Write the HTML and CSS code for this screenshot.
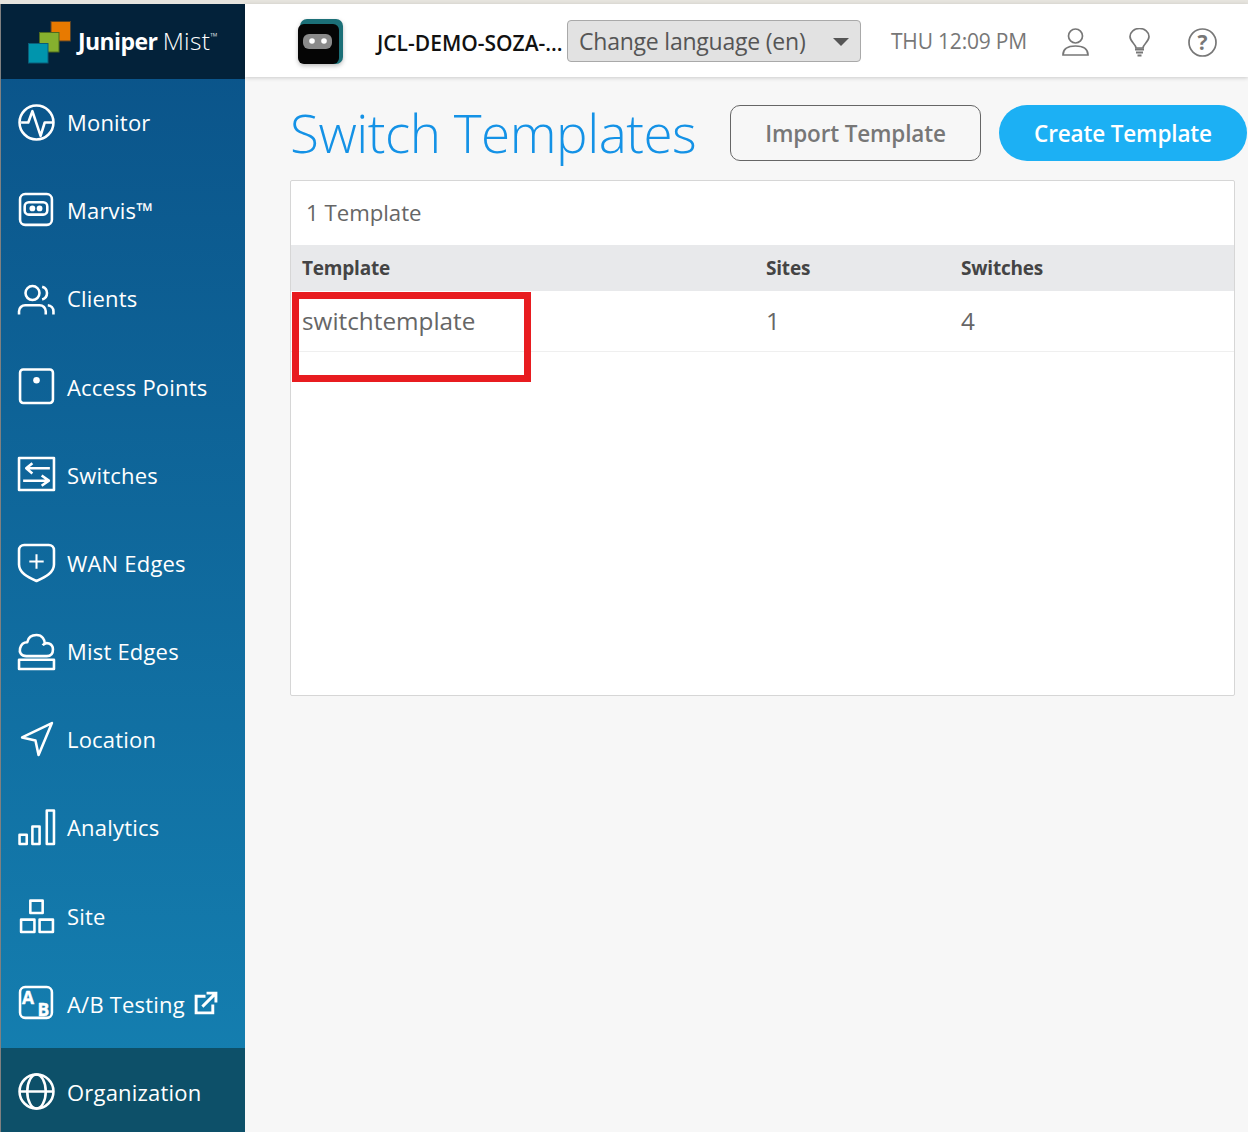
FILE: index.html
```html
<!DOCTYPE html>
<html lang="en">
<head>
<meta charset="utf-8">
<title>Switch Templates</title>
<link rel="stylesheet" href="styles.css">
</head>
<body>
<div class="app">
  <aside class="sidebar">
    <div class="brand">
      <svg class="brand-mark" width="44" height="44" viewBox="0 0 44 44">
        <rect x="23" y="0.500" width="19.500" height="19.500" fill="#e87a00" stroke="#5a4326"/>
        <rect x="11.500" y="11.500" width="19.500" height="19.500" fill="#86b02e" stroke="#4e6b1e"/>
        <rect x="0.500" y="22.500" width="19.500" height="19.500" fill="#0095ad" stroke="#0a5d78"/>
      </svg>
      <span class="brand-name"><b>Juniper</b> <span class="brand-thin">Mist</span><sup>™</sup></span>
    </div>
    <nav class="nav">
      <a class="nav-item"><svg class="ico" viewBox="0 0 36 36"><circle cx="18" cy="18" r="16.500"/><path d="M3 18h7l4-11 8 24 4-13h8"/></svg><span>Monitor</span></a>
      <a class="nav-item"><svg class="ico" viewBox="0 0 36 36"><rect x="2" y="2" width="31" height="30" rx="5"/><rect x="6.500" y="10" width="22" height="12" rx="4"/><circle cx="14" cy="16" r="2.800" class="solid"/><circle cx="21" cy="16" r="2.800" class="solid"/></svg><span>Marvis™</span></a>
      <a class="nav-item"><svg class="ico" viewBox="0 0 36 36"><circle cx="14.100" cy="12.700" r="6.800"/><path d="M1 33.500v-3a6 6 0 0 1 6-6h14a6 6 0 0 1 6 6v3M23.500 6.500a6.500 6.500 0 0 1 0 12.500M29 24.500a6 6 0 0 1 5.500 6v3"/></svg><span>Clients</span></a>
      <a class="nav-item"><svg class="ico" viewBox="0 0 36 36"><rect x="2" y="1.500" width="32" height="32.500" rx="3"/><circle cx="18" cy="12" r="3.200" class="solid"/></svg><span>Access Points</span></a>
      <a class="nav-item"><svg class="ico" viewBox="0 0 36 36"><rect x="1" y="2" width="34" height="31"/><path d="M31 12H8l6-5M8 12l6 5M5 24h25l-7-5M30 24l-7 5"/></svg><span>Switches</span></a>
      <a class="nav-item"><svg class="ico" viewBox="0 0 36 36"><path d="M6 1h24a5 5 0 0 1 5 5v14c0 8-8 12-17 16C9 32 1 28 1 20V6a5 5 0 0 1 5-5z"/><path class="thin" d="M18 10v14M11 17h14"/></svg><span>WAN Edges</span></a>
      <a class="nav-item"><svg class="ico" viewBox="0 0 36 36"><path d="M8 22.500C3 22.500 1 19 2 15 3 11 6 9 9 9 10 4 14 2 18 2 24 2 26 7 26 10M24 12C27 8 34 10 34 16 34 20 32 22.500 28 22.500H8"/><rect x="1" y="26" width="34" height="9"/></svg><span>Mist Edges</span></a>
      <a class="nav-item"><svg class="ico" viewBox="0 0 36 36"><path d="M33 2 4 16l13 3 3 14z"/></svg><span>Location</span></a>
      <a class="nav-item"><svg class="ico" viewBox="0 0 36 36"><rect x="1.500" y="25" width="7" height="9"/><rect x="14" y="17" width="7" height="17"/><rect x="28" y="1.500" width="7" height="32.500"/></svg><span>Analytics</span></a>
      <a class="nav-item"><svg class="ico" viewBox="0 0 36 36"><rect x="12" y="3.500" width="12" height="12"/><rect x="3" y="22" width="13" height="12"/><rect x="21" y="22" width="13" height="12"/></svg><span>Site</span></a>
      <a class="nav-item"><svg class="ico" viewBox="0 0 36 36"><rect x="2" y="2" width="31" height="30" rx="5"/><text x="4" y="18.300" class="ab">A</text><text x="19" y="30.500" class="ab">B</text></svg><span>A/B Testing</span><svg class="ext" viewBox="0 0 24 24"><path d="M12 5H3v16h16v-8M9 15 21 3M13 2h9v9"/></svg></a>
      <a class="nav-item active"><svg class="ico" viewBox="0 0 36 36"><circle cx="18" cy="18" r="16.500"/><ellipse cx="18" cy="18" rx="9" ry="16.500"/><path d="M2 18h32"/></svg><span>Organization</span></a>
    </nav>
  </aside>
  <div class="main">
    <header class="topbar">
      <svg class="bot" width="48" height="50" viewBox="0 0 48 50">
        <rect x="3" y="1" width="43" height="45" rx="7" fill="#1c7078"/>
        <rect x="1" y="6" width="41" height="40" rx="6" fill="#050505"/>
        <rect x="6" y="16" width="29" height="15" rx="6" fill="#8a8a8a"/>
        <circle cx="15" cy="23" r="2.800" fill="#fff"/>
        <circle cx="27" cy="23" r="2.800" fill="#fff"/>
      </svg>
      <span class="org-name">JCL-DEMO-SOZA-...</span>
      <div class="lang"><span>Change language (en)</span><i class="caret"></i></div>
      <span class="clock">THU 12:09 PM</span>
      <div class="tools">
        <svg class="tool" viewBox="0 0 29 29"><circle cx="14.500" cy="8" r="7"/><path d="M2 27c0-5 3-9 12.500-9S27 22 27 27z"/></svg>
        <svg class="tool" viewBox="0 0 29 29"><path d="M11 20c0-4-6-6-6-11.500a9.500 8 0 0 1 19 0C24 14 18 16 18 20z"/><path class="lines" d="M10 21.500h9M11 24.500h7M12.500 27.500h4"/></svg>
        <svg class="tool" viewBox="0 0 29 29"><circle cx="14.500" cy="14.500" r="13.500"/><text x="14.500" y="21.500" class="q">?</text></svg>
      </div>
    </header>
    <main class="content">
      <div class="page-head">
        <h1>Switch Templates</h1>
        <button class="btn btn-outline">Import Template</button>
        <button class="btn btn-primary">Create Template</button>
      </div>
      <section class="panel">
        <div class="panel-title">1 Template</div>
        <div class="row row-head"><span>Template</span><span>Sites</span><span>Switches</span></div>
        <div class="row row-body"><span>switchtemplate</span><span>1</span><span>4</span><i class="highlight"></i></div>
      </section>
    </main>
  </div>
</div>
</body>
</html>
```
FILE: styles.css
```css
* { box-sizing: border-box; }
html, body { margin: 0; height: 100%; overflow: hidden; }
body { font-family: "Open Sans", "Liberation Sans", sans-serif; color: #555; background: #e6e4de; }
.app { display: grid; grid-template-columns: 245px 1fr; height: 1132px; padding-top: 4px; }

.sidebar { display: flex; flex-direction: column; border-left: 1px solid #808080; background: linear-gradient(180deg, #0a5288 0%, #1581b2 100%); overflow: hidden; min-height: 0; }
.brand { flex: 0 0 75px; display: flex; align-items: flex-start; background: #03223a; padding: 17px 0 0 27px; gap: 6px; }
.brand-name { color: #fff; font-size: 23px; line-height: 40px; letter-spacing: -0.6px; white-space: nowrap; }
.brand-name b { font-weight: 700; }
.brand-thin { font-weight: 300; font-size: 24.500px; letter-spacing: 0.3px; }
.brand-name sup { font-size: 10px; vertical-align: 10px; line-height: 0; letter-spacing: 0; font-weight: 300; }
.nav { display: flex; flex-direction: column; margin-top: -1px; }
.nav-item { flex: 0 0 88.18px; display: flex; align-items: center; gap: 12px; padding-left: 17px; color: #fff; font-size: 22px; letter-spacing: 0.2px; }
.nav-item.active { background: #0d5069; }
.nav-item span { white-space: nowrap; }
.ico { width: 37px; height: 37px; flex: none; fill: none; stroke: #fff; stroke-width: 2.500; stroke-linejoin: round; overflow: visible; }
.ico .solid { fill: #fff; stroke: none; }
.ico .thin { stroke-width: 2; }
.ico .ab { fill: #fff; stroke: #fff; stroke-width: 0.4; font-size: 17px; font-weight: 700; letter-spacing: 0; }
.ext { width: 25px; height: 25px; fill: none; stroke: #fff; stroke-width: 2.800; margin-left: -4px; }

.main { display: flex; flex-direction: column; background: #f7f7f7; min-width: 0; }
.topbar { flex: 0 0 73px; display: flex; align-items: center; background: #fff; box-shadow: 0 1px 4px rgba(0,0,0,.18); padding-left: 52px; position: relative; }
.bot { flex: none; filter: drop-shadow(0 2px 2px rgba(0,0,0,.25)); margin-top: 4px; }
.org-name { color: #111; font-size: 21px; font-weight: 600; margin-left: 32px; margin-top: 5px; white-space: nowrap; width: 190px; }
.lang { flex: none; width: 294px; height: 42px; margin-top: 1px; display: flex; align-items: center; justify-content: space-between; padding: 0 11px 0 11px; background: #e2e2e2; border: 1px solid #a9a9a9; border-radius: 4px; color: #555; font-size: 23px; letter-spacing: -0.22px; }
.caret { width: 0; height: 0; margin-top: 2px; border-left: 8px solid transparent; border-right: 8px solid transparent; border-top: 8px solid #555; }
.clock { margin-left: 30px; color: #777; font-size: 21px; letter-spacing: -0.2px; white-space: nowrap; }
.tools { display: flex; gap: 34.500px; margin-left: 34.500px; margin-top: 3px; }
.tool { width: 29px; height: 29px; fill: none; stroke: #777; stroke-width: 1.700; }
.tool .lines { stroke-width: 1.800; }
.tool .q { fill: #777; stroke: none; font-size: 21px; font-weight: 700; text-anchor: middle; }

.content { flex: 1; padding: 28px 0 0 45px; min-height: 0; }
.page-head { display: flex; align-items: center; height: 56px; margin-bottom: 19px; }
h1 { margin: 0; color: #1492e6; font-size: 53px; font-weight: 300; letter-spacing: -0.48px; white-space: nowrap; width: 440px; line-height: 54px; }
.btn { height: 56px; font-family: inherit; font-size: 22.500px; letter-spacing: -0.15px; font-weight: 600; border-radius: 10px; padding: 0; }
.btn-outline { width: 251px; background: transparent; border: 1px solid #666; color: #777; }
.btn-primary { width: 248px; margin-left: 18px; background: #1cb0f4; color: #fff; border: none; border-radius: 28px; }

.panel { width: 945px; height: 516px; background: #fff; border: 1px solid #d6d6d6; border-radius: 2px; }
.panel-title { height: 64px; display: flex; align-items: center; padding: 0 0 2px 15px; font-size: 22.200px; color: #666; }
.row { display: grid; grid-template-columns: 464px 195px 1fr; padding-left: 11px; align-items: center; }
.row-head { height: 46px; background: #e8e9eb; font-size: 19px; letter-spacing: -0.2px; font-weight: 700; color: #444; }
.row-body { height: 61px; padding-bottom: 2px; border-bottom: 1px solid #efefef; font-size: 24.300px; color: #666; position: relative; }
.highlight { position: absolute; left: 1px; top: 1px; width: 239px; height: 90px; border: 7px solid #e81c20; }
```
